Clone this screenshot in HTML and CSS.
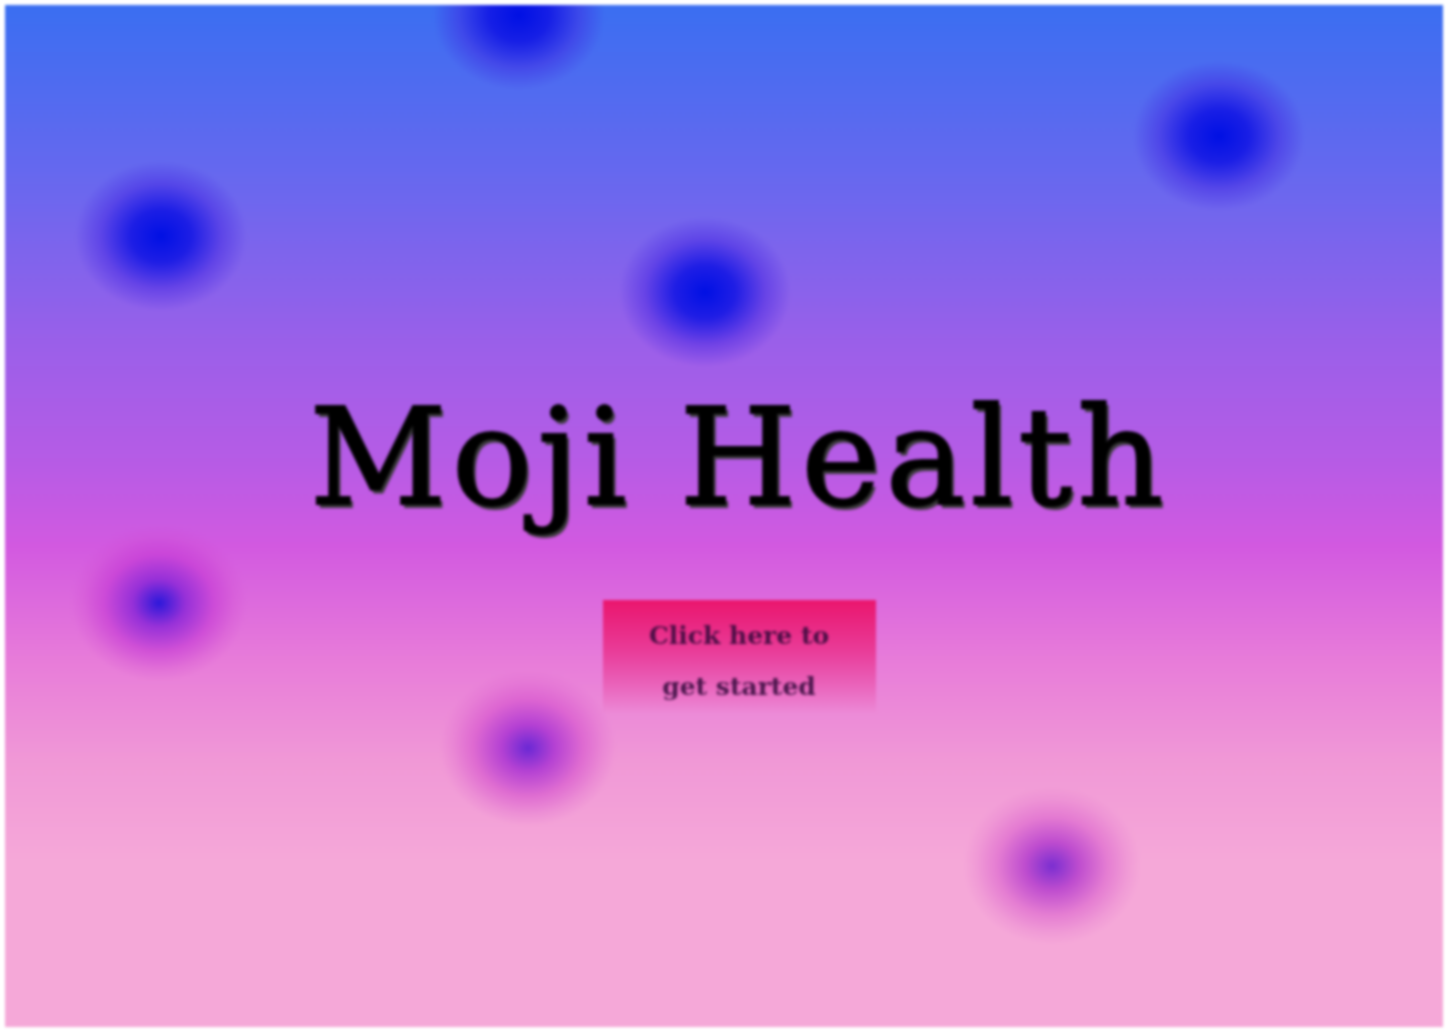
FILE: index.html
```html
<!DOCTYPE html>
<html>
<head>
<meta charset="utf-8">
<title>Moji Health</title>
<link rel="stylesheet" href="styles.css">
</head>
<body>
<div class="scene">
  <div class="blob b1"></div>
  <div class="blob b2"></div>
  <div class="blob b3"></div>
  <div class="blob b4"></div>
  <div class="blob soft b5"></div>
  <div class="blob soft b6"></div>
  <div class="blob soft b7"></div>
  <main class="hero">
    <h1 class="title">Moji Health</h1>
    <a class="cta" href="#">Click here to<br>get started</a>
  </main>
</div>
</body>
</html>
```
FILE: styles.css
```css
html, body {
  margin: 0;
  padding: 0;
  background: #ffffff;
}
body {
  padding: 5px;
  height: 1022px;
  overflow: hidden;
}
.scene {
  position: relative;
  height: 1022px;
  overflow: hidden;
  filter: blur(1.4px);
  background: linear-gradient(180deg,
    #3a6ef1 0%,
    #6a67ee 18%,
    #9a5fe9 33%,
    #b75be5 45%,
    #d259e0 53%,
    #e77bd9 64%,
    #f098d6 74%,
    #f5a8d8 84%,
    #f5a8d8 100%);
}
.blob {
  position: absolute;
  width: 172px;
  height: 150px;
  border-radius: 50%;
  background: radial-gradient(closest-side, #0010e4 0%, rgba(16, 20, 228, 0.88) 35%, rgba(60, 30, 225, 0.45) 70%, rgba(80, 40, 225, 0) 100%);
}
.b1 { left: 428px; top: -65px; }
.b2 { left: 1128px; top: 56px; }
.b3 { left: 70px; top: 156px; }
.b4 { left: 614px; top: 212px; }
.b5 {
  left: 66px; top: 520px; width: 176px; height: 156px;
  background: radial-gradient(closest-side, #2c18da 0%, rgba(140, 40, 215, 0.88) 30%, rgba(195, 55, 212, 0.62) 62%, rgba(205, 70, 210, 0.25) 85%, rgba(210, 80, 210, 0) 100%);
}
.b6 {
  left: 435px; top: 665px; width: 176px; height: 156px;
  background: radial-gradient(closest-side, #6a28d4 0%, rgba(170, 50, 210, 0.85) 30%, rgba(210, 75, 205, 0.58) 62%, rgba(215, 85, 205, 0.22) 85%, rgba(220, 100, 205, 0) 100%);
}
.b7 {
  left: 958px; top: 782px; width: 178px; height: 158px;
  background: radial-gradient(closest-side, #7a2ed0 0%, rgba(180, 60, 205, 0.85) 30%, rgba(215, 90, 205, 0.55) 62%, rgba(220, 100, 205, 0.2) 85%, rgba(225, 110, 205, 0) 100%);
}
.hero {
  position: relative;
  display: flex;
  flex-direction: column;
  align-items: center;
  padding-top: 368px;
  padding-left: 30px;
}
.title {
  margin: 0;
  font-family: "DejaVu Serif", "Liberation Serif", serif;
  font-weight: normal;
  font-size: 134px;
  line-height: 170px;
  letter-spacing: 5px;
  color: #000;
  -webkit-text-stroke: 2px #000;
  text-shadow: 3px 4px 1px #3a3a3a;
}
.cta {
  margin-top: 57px;
  width: 273px;
  height: 114px;
  box-sizing: border-box;
  padding-top: 10px;
  display: block;
  text-align: center;
  text-decoration: none;
  font-family: "DejaVu Serif", "Liberation Serif", serif;
  font-weight: bold;
  font-size: 25px;
  line-height: 51px;
  color: rgba(48, 8, 58, 0.85);
  background: linear-gradient(180deg, #ea166d 0%, rgba(234, 40, 130, 0.75) 45%, rgba(240, 150, 215, 0) 100%);
}
```
